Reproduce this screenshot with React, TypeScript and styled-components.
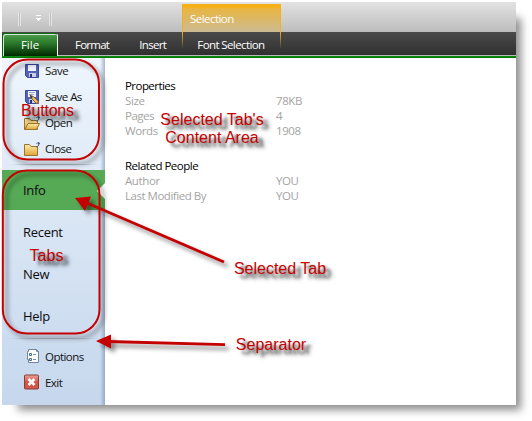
import React from "react";
import styled, { createGlobalStyle } from "styled-components";

const Global = createGlobalStyle`
  * { box-sizing: border-box; }
  html, body { margin: 0; background: #fff; overflow: hidden; }
  body { font-family: "Open Sans", "Noto Sans", sans-serif; font-size: 11px; }
`;

const Page = styled.div`
  position: relative;
  width: 532px;
  height: 421px;
  padding: 2px;
  overflow: hidden;
`;

const Shadow = styled.div`
  position: absolute;
  left: 18px;
  top: 18px;
  width: 503px;
  height: 392px;
  background: #8c8c8c;
  filter: blur(4px);
`;

const Window = styled.div`
  position: relative;
  width: 514px;
  height: 403px;
  background: #fff;
  display: flex;
  flex-direction: column;
`;

const TitleBar = styled.div`
  height: 30px;
  flex: none;
  padding: 10px 0 0 16px;
  background: linear-gradient(#e2e2e2, #bdbdbd);
`;

const MenuBar = styled.div`
  height: 26px;
  flex: none;
  display: flex;
  background: linear-gradient(#4a4a4a, #303030 23px, #b9b9b9 23px, #b9b9b9 24px, #0d930d 24px, #006b00 26px);
`;

const FileTab = styled.div`
  width: 56px;
  height: 23px;
  margin: 1px 0 0;
  border: 1px solid #f0f5ef;
  border-left-color: #006100;
  border-top-color: #087008;
  border-bottom: 0;
  border-radius: 3px 3px 0 0;
  box-shadow: inset 1px 1px #d8e8d8;
  background: linear-gradient(#50a050, #287528 45%, #002900);
  display: flex;
  align-items: center;
  justify-content: center;
`;

const MenuText = styled.span<{ $gap?: number; $track?: number }>`
  margin-left: ${(p) => p.$gap ?? 0}px;
  color: #fff;
  font-size: 11.5px;
  line-height: 26px;
  letter-spacing: ${(p) => p.$track ?? 0}px;
  white-space: nowrap;
`;

const Contextual = styled.div`
  position: absolute;
  left: 180px;
  top: 2px;
  width: 99px;
  height: 45px;
  background:
    linear-gradient(#f5b01a, #f5b01a) 0 0 / 100% 4px no-repeat,
    linear-gradient(#f5b01a 28px, #f5b01a00) 0 0 / 1px 100% no-repeat,
    linear-gradient(#f5b01a 28px, #f5b01a00) 100% 0 / 1px 100% no-repeat,
    linear-gradient(#efb432, #cbbb92) 0 0 / 100% 28px no-repeat;
  color: #fff;
  font-size: 11.5px;
  line-height: 30px;
  padding-left: 8px;
  letter-spacing: -0.55px;
`;

const Body = styled.div`
  flex: 1;
  min-height: 0;
  display: flex;
`;

const Sidebar = styled.nav`
  width: 103px;
  background:
    linear-gradient(90deg, #0000 98px, #7187a800 98px, #7187a890 103px),
    linear-gradient(#eef5fd, #d8e5f4 50%, #c6d7ed);
`;

const Command = styled.div<{ $track?: number; $lift?: number }>`
  height: 26px;
  display: flex;
  align-items: center;
  padding-left: 22px;
  gap: 5px;
  color: #111;
  font-size: 11.5px;
  letter-spacing: ${(p) => p.$track ?? -0.55}px;
  svg { flex: none; }
  span { padding-bottom: ${(p) => p.$lift ?? 0}px; }
`;

const Divider = styled.div<{ $before: number; $after: number }>`
  height: 1px;
  margin: ${(p) => p.$before}px 5px ${(p) => p.$after}px 6px;
  background: linear-gradient(90deg, #9da9b500, #adb5bf 30%, #adb5bf 70%, #9da9b500);
`;

const Tab = styled.div<{ $active?: boolean; $track?: number }>`
  position: relative;
  height: 40px;
  margin-bottom: 2px;
  padding-left: 21px;
  line-height: 41px;
  font-size: 13px;
  letter-spacing: ${(p) => p.$track ?? -0.3}px;
  color: #0b0b0b;
  background: ${(p) => (p.$active ? "#56aa56" : "transparent")};
  &::after {
    content: "";
    display: ${(p) => (p.$active ? "block" : "none")};
    position: absolute;
    right: 0;
    top: 13px;
    border: solid transparent;
    border-width: 8px 8px 8px 0;
    border-right-color: #fff;
  }
`;

const Content = styled.main`
  padding: 20px 0 0 20px;
`;

const Section = styled.section`
  width: 250px;
  margin-bottom: 20px;
  line-height: 15px;
`;

const Heading = styled.div<{ $track: number }>`
  height: 15px;
  color: #000;
  font-size: 11.5px;
  letter-spacing: ${(p) => p.$track}px;
`;

const Field = styled.div<{ $track?: number }>`
  display: grid;
  grid-template-columns: 151px 1fr;
  height: 15px;
  color: #a4a4a4;
  font-size: 11.5px;
  letter-spacing: ${(p) => p.$track ?? -0.4}px;
`;

const Overlay = styled.svg`
  position: absolute;
  left: 0;
  top: 0;
  filter: drop-shadow(4px 4px 2px #0007);
`;

const Note = styled.div<{ $x: number; $y: number; $w: number; $track?: number }>`
  position: absolute;
  left: ${(p) => p.$x}px;
  top: ${(p) => p.$y}px;
  width: ${(p) => p.$w}px;
  color: #c40000;
  font: 16px/18px "Liberation Sans", Arial, sans-serif;
  letter-spacing: ${(p) => p.$track ?? 0}px;
  text-align: center;
  white-space: nowrap;
  text-shadow: 5px 4px 3px #0008, 6px 5px 4px #0006;
`;

const QuickAccess = () => (
  <svg width="38" height="16" shapeRendering="crispEdges">
    <path d="M.5 .5v13M2.5 .5v13M31.5 .5v13M33.5 .5v13" stroke="#e6e6e6" fill="none" />
    <path d="M1.5 .5v13M32.5 .5v13" stroke="#bfbfbf" />
    <path d="M18 3h5v1h-5zM18 6h5l-2.5 3z" fill="#fff" />
  </svg>
);

const Disk = ({ pencil = false }: { pencil?: boolean }) => (
  <svg width="16" height="16">
    <path d="M1.5 1.5h13v13h-11l-2-2z" fill="#5361ba" stroke="#3d479b" />
    <path d="M4 2h8v6H4z" fill="#f1f4ff" />
    <path d="M5 10h7v4H5z" fill="#c8d0e8" />
    <path d="M6 11h2v3H6z" fill="#273277" />
    {pencil && (
      <>
        <path d="M5 3.5h6M5 5.5h5" stroke="#98a5c6" />
        <path d="M6 6l2 4 5 5 2-2-5-5z" fill="#f1bd58" stroke="#654a2b" strokeWidth=".8" />
        <path d="M6 6l1 3 2-1z" fill="#333" />
        <path d="M12.5 14.5l2-2" stroke="#cf695b" strokeWidth="1.6" />
      </>
    )}
  </svg>
);

const Folder = ({ open = false }: { open?: boolean }) => (
  <svg width="16" height="16">
    <defs>
      <linearGradient id="folder" x2="0" y2="1">
        <stop stopColor="#ffedaa" />
        <stop offset="1" stopColor="#dfa53a" />
      </linearGradient>
    </defs>
    <path d="M.5 14.5v-11h5l1.5 2h6.5v9z" fill="url(#folder)" stroke="#9b752d" />
    {open && <path d="M1 14.5l3-6h11.5l-3 6z" fill="url(#folder)" stroke="#9b752d" />}
    <path d="M12 6c2 0 3-1 2.5-4M12.5 3l2-2 1.5 2.5" stroke="#455d86" fill="none" />
  </svg>
);

const OptionsIcon = () => (
  <svg width="16" height="16">
    <path d="M4.5 1.5h8l2 2v11h-10v-3h-1v-8h1z" fill="#fbfdff" stroke="#70859b" />
    <path d="M12.5 1.5v2h2M9 6.5h3M9 11.5h3" stroke="#7890a7" fill="none" />
    <path d="M5.5 5.5h2v2h-2zM5.5 10.5h2v2h-2z" fill="#dae5f1" stroke="#4e6d8e" />
  </svg>
);

const ExitIcon = () => (
  <svg width="16" height="16">
    <defs>
      <linearGradient id="exit" x2="0" y2="1">
        <stop stopColor="#e7a197" />
        <stop offset=".5" stopColor="#d55647" />
        <stop offset="1" stopColor="#cf5948" />
      </linearGradient>
    </defs>
    <rect x=".5" y="1" width="14" height="14" rx="1" fill="url(#exit)" stroke="#8e3b36" />
    <path d="M4.5 5l6 6M10.5 5l-6 6" stroke="#fff" strokeWidth="2.5" />
  </svg>
);

export default function App() {
  return (
    <Page>
      <Global />
      <Shadow />
      <Window>
        <TitleBar><QuickAccess /></TitleBar>
        <MenuBar>
          <FileTab><MenuText>File</MenuText></FileTab>
          <MenuText $gap={17} $track={-0.75}>Format</MenuText>
          <MenuText $gap={30} $track={-0.65}>Insert</MenuText>
          <MenuText $gap={31} $track={-0.6}>Font Selection</MenuText>
        </MenuBar>
        <Contextual>Selection</Contextual>
        <Body>
          <Sidebar>
            <Command $lift={2} $track={-0.4}><Disk /><span>Save</span></Command>
            <Command $lift={2}><Disk pencil /><span>Save As</span></Command>
            <Command $lift={2} $track={-0.6}><Folder open /><span>Open</span></Command>
            <Command $lift={2} $track={-0.5}><Folder /><span>Close</span></Command>
            <Divider $before={2} $after={5} />
            <Tab $active>Info</Tab>
            <Tab>Recent</Tab>
            <Tab>New</Tab>
            <Tab>Help</Tab>
            <Divider $before={1} $after={4} />
            <Command><OptionsIcon /><span>Options</span></Command>
            <Command><ExitIcon /><span>Exit</span></Command>
          </Sidebar>
          <Content>
            <Section>
              <Heading $track={-0.55}>Properties</Heading>
              <Field><span>Size</span><span>78KB</span></Field>
              <Field $track={-0.5}><span>Pages</span><span>4</span></Field>
              <Field><span>Words</span><span>1908</span></Field>
            </Section>
            <Section>
              <Heading $track={-0.5}>Related People</Heading>
              <Field><span>Author</span><span>YOU</span></Field>
              <Field $track={-0.48}><span>Last Modified By</span><span>YOU</span></Field>
            </Section>
          </Content>
        </Body>
      </Window>
      <Overlay width="532" height="421">
        <g fill="none" stroke="#c40000" strokeWidth="2">
          <rect x="3.5" y="59.5" width="95.5" height="100" rx="24" />
          <rect x="2.8" y="170.5" width="96.7" height="163" rx="24" />
          <path d="M87 203L224 262M108 341.5L225 344.7" strokeWidth="2.8" />
        </g>
        <path d="M75 198L91 196.5L85 211ZM96 341L111 334.5V348.5Z" fill="#c40000" />
      </Overlay>
      <Note $x={21} $y={102} $w={52} $track={-0.2}>Buttons</Note>
      <Note $x={28} $y={247} $w={37}>Tabs</Note>
      <Note $x={156} $y={111} $w={112}>Selected Tab's<br />Content Area</Note>
      <Note $x={231} $y={260} $w={98}>Selected Tab</Note>
      <Note $x={233} $y={336} $w={76}>Separator</Note>
    </Page>
  );
}
